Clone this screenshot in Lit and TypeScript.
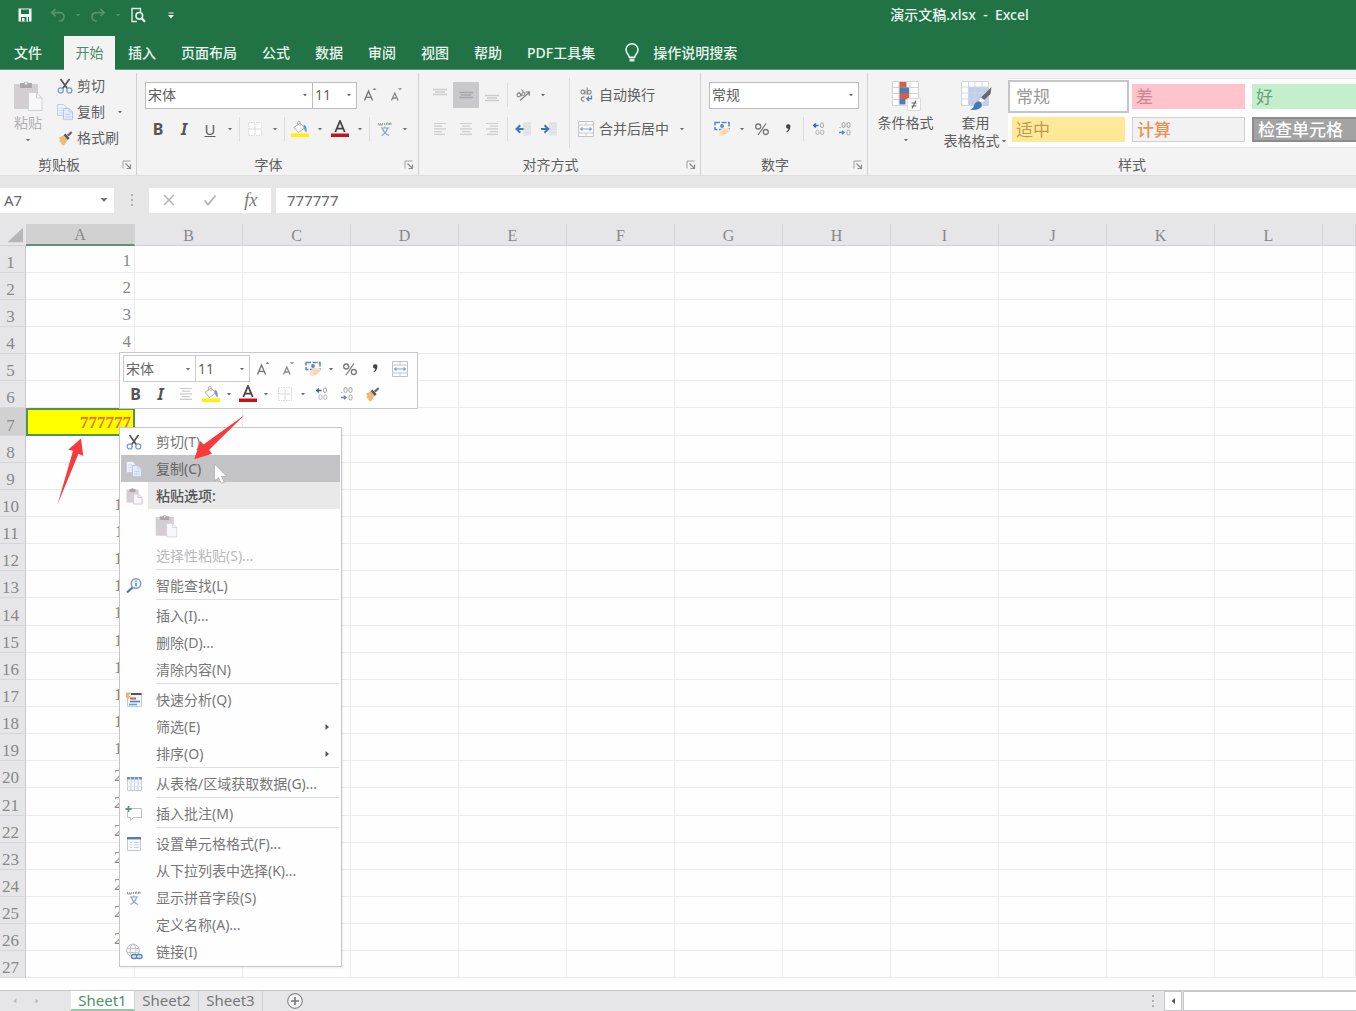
import { LitElement, html, svg, css, nothing, TemplateResult } from "lit";
import { customElement, state } from "lit/decorators.js";
import { classMap } from "lit/directives/class-map.js";

type Shape = [number, number, unknown];

const ICONS: Record<string, Shape> = {
  save: [16, 16, svg`<path d="M1.500 1.500h13v13h-13z" fill="#f4fbf6"/><path d="M4 2.500h8v4.500H4z" fill="#217346"/><path d="M4 10h8v4.500H4z" fill="#217346"/><path d="M5 11h2.500v3.500H5zM9.500 10h1.500v4.500h-1.500z" fill="#f4fbf6"/>`],
  undo: [16, 16, svg`<path d="M5.500 2 1.800 5.600l3.700 3.600M2.200 5.600h7.300c3 0 4.500 1.900 4.500 4.100 0 2.600-1.800 4.300-4.800 4.500" fill="none" stroke="#56936f" stroke-width="1.700"/>`],
  redo: [16, 16, svg`<path d="m10.500 2 3.700 3.600-3.700 3.600M13.800 5.600H6.500C3.500 5.600 2 7.500 2 9.700c0 2.600 1.800 4.300 4.800 4.500" fill="none" stroke="#56936f" stroke-width="1.700"/>`],
  preview: [16, 16, svg`<path d="M7 14.500H2V1.500h8.500V5" fill="none" stroke="#dcefe3" stroke-width="1.400"/><circle cx="9.300" cy="8.800" r="3.300" fill="none" stroke="#eef8f1" stroke-width="1.600"/><path d="m11.600 11.200 3.400 3.500" stroke="#eef8f1" stroke-width="2.200"/>`],
  customize: [10, 10, svg`<path d="M2.500 3h5" stroke="#e8f4ec" stroke-width="1"/><path d="M2 5h6L5 8.500z" fill="#e8f4ec"/>`],
  bulb: [16, 20, svg`<path d="M5.300 14.300c0-2.600-3.300-3.800-3.300-7.500a6 6 0 0 1 12 0c0 3.700-3.300 4.900-3.300 7.500z" fill="none" stroke="#f1faf4" stroke-width="1.500"/><path d="M5.500 15.500h5v3h-5z" fill="#d5ecdd"/>`],
  paste: [30, 32, svg`<path d="M1 4h24v25H1z" fill="#d3ced2"/><path d="M7 3h3.500a3 3 0 0 1 5 0H19v5H7z" fill="#aaa6a9"/><circle cx="13" cy="3.500" r="1.200" fill="#f3f3f3"/><path d="M15.500 12.500h8l5.500 5.500v12.500H15.500z" fill="#f8f7f9" stroke="#d5d0d6"/><path d="M23.500 12.500V18H29" fill="none" stroke="#cfcad0"/>`],
  pasteSm: [18, 18, svg`<path d="M1.500 2.500h12v13h-12z" fill="#d5ced3"/><path d="M4.500 2H6a1.800 1.800 0 0 1 3 0h1.500v3h-6z" fill="#a9a4a7"/><path d="M8.500 7h4.800L17 10.500V17H8.500z" fill="#f8f6f9" stroke="#d0cad0"/><path d="M13 7v3.500h4" fill="none" stroke="#d0cad0"/>`],
  cut: [16, 16, svg`<path d="m3.500 1 6.800 9.600M12.500 1 5.700 10.600" stroke="#555" stroke-width="1.700"/><circle cx="3.700" cy="12.400" r="2.500" fill="none" stroke="#7c9cd0" stroke-width="1.300"/><circle cx="12.300" cy="12.400" r="2.500" fill="none" stroke="#7c9cd0" stroke-width="1.300"/>`],
  copy: [18, 18, svg`<path d="M1.500 1.500h6L10.500 4v8.500h-9z" fill="#eef3fb" stroke="#c3cddf"/><path d="M3 5h4M3 7.500h4M3 10h4" stroke="#cddaf0"/><path d="M7.500 5.500h5.500l3.500 3.200v8h-9z" fill="#e2ebfa" stroke="#b7c6e0"/><path d="M13 5.500v3.500h3.500M9.500 11.500h5M9.500 14h5" stroke="#bccfee" fill="none"/>`],
  brush: [16, 16, svg`<path d="m1.500 8 5-2.500 4 4.500-3.500 5.500c-1.200-.2-2.300-1-3-2l1-1.500-2 .5-.8-1.500 1.500-1.200z" fill="#eebb71"/><path d="m6.500 5.300 2-1.800 4.200 4.800-2 1.800z" fill="#5d5a5a"/><path d="m10 4.800 4-3.600 1.400 1.600-3.800 3.700z" fill="#686464"/>`],
  growA: [18, 18, svg`<path d="m3.500 14.500 4-9.500 4 9.500M5 11.400h5" fill="none" stroke="#777" stroke-width="1.400"/><path d="M11.500 4h4l-2-2.200z" fill="#888"/>`],
  shrinkA: [18, 18, svg`<path d="m4.500 14.500 3.300-7.500 3.300 7.500M5.800 12h4" fill="none" stroke="#888" stroke-width="1.300"/><path d="M11 2.200h4L13 4.300z" fill="#888"/>`],
  borders: [16, 16, svg`<path d="M1.500 1.500h13v13h-13z" fill="#fff" stroke="#dcdadc" stroke-dasharray="1.500 1"/><path d="M8 2v12M2 8h12" stroke="#dcdadc"/>`],
  fill: [18, 18, svg`<path d="m3 7.500 6-4.500 4.500 5-6 4.500z" fill="#f8f8f8" stroke="#b0b0b2"/><path d="M6.500 5.500V2.300c0-1.500 2.700-1.500 2.700 0V6" fill="none" stroke="#b0b0b2"/><path d="M12.500 4.500c3 1 3.500 4 3 8-1.800-1-3-4.500-3-8z" fill="#6d97cc"/><path d="M0 13.500h18V17H0z" fill="#fff100"/>`],
  fontColor: [18, 18, svg`<path d="m4.300 12 4.700-11 4.700 11M6 8.600h6" fill="none" stroke="#444" stroke-width="1.800"/><path d="M0 13.500h18V17H0z" fill="#c8101e"/>`],
  phonetic: [16, 16, svg`<path d="M1.500 2v2h2V2M3.500 4h2V2M7.500 2v2M9.500 4V2h1.500v2M12.500 4V2H14v2" fill="none" stroke="#9a9a9a"/><path d="M4 7h8.500M8 5.500V7M10.500 7.500c-1 3.500-3 5.500-6 7M5.500 7.500c1 3.500 3 5.500 6.500 7" fill="none" stroke="#87a6d6" stroke-width="1.200"/>`],
  alignTop: [14, 14, svg`<path d="M0 1.500h14M2 4h10M0 6.500h14" stroke="#cdcbcd" stroke-width="1.400"/>`],
  alignMid: [14, 14, svg`<path d="M0 4.500h14M2 7h10M0 9.500h14" stroke="#a9a7aa" stroke-width="1.400"/>`],
  alignBot: [14, 14, svg`<path d="M0 7.500h14M2 10h10M0 12.500h14" stroke="#cdcbcd" stroke-width="1.400"/>`],
  alignLeft: [14, 14, svg`<path d="M1 1.500h12M1 4.200h8M1 6.900h12M1 9.600h8M1 12.300h11" stroke="#cdcbcd" stroke-width="1.200"/>`],
  alignCenter: [14, 14, svg`<path d="M1 1.500h12M3 4.200h8M1 6.900h12M3 9.600h8M1 12.300h12" stroke="#cdcbcd" stroke-width="1.200"/>`],
  alignRight: [14, 14, svg`<path d="M1 1.500h12M5 4.200h8M1 6.900h12M5 9.600h8M2 12.300h11" stroke="#cdcbcd" stroke-width="1.200"/>`],
  orient: [16, 16, svg`<path d="M5 13.500 14 5.500M10.500 5l4-.200-.300 4" fill="none" stroke="#808080" stroke-width="1.200"/><circle cx="3.800" cy="8" r="1.800" fill="none" stroke="#8a8a8a" stroke-width="1.200"/><path d="m3.800 5 3.200 4.200M6.500 2.500l3.500 4.500" stroke="#8a8a8a" stroke-width="1.200"/><circle cx="8.300" cy="7" r="1.500" fill="none" stroke="#8a8a8a"/>`],
  outdent: [16, 16, svg`<path d="M8 1.500h8v13H8z" fill="#dcdfe5"/><path d="M8 4h8M8 7h8M8 10h8M8 13h8" stroke="#e9eaee"/><path d="M8.500 8H2M5.300 4.300 1.500 8l3.800 3.700" fill="none" stroke="#3f78b8" stroke-width="2"/>`],
  indent: [16, 16, svg`<path d="M8 1.500h8v13H8z" fill="#dcdfe5"/><path d="M8 4h8M8 7h8M8 10h8M8 13h8" stroke="#e9eaee"/><path d="M0 8h6.500M3.500 4.300 7.300 8l-3.800 3.700" fill="none" stroke="#3f78b8" stroke-width="2"/>`],
  wrap: [16, 16, svg`<circle cx="4.700" cy="5" r="1.800" fill="none" stroke="#8c8c8c" stroke-width="1.200"/><path d="M7 3v4.500M9.200.500v7" stroke="#8c8c8c" stroke-width="1.200"/><circle cx="11.200" cy="5.300" r="1.900" fill="none" stroke="#8c8c8c" stroke-width="1.200"/><path d="M6.500 10.200c-3.200-1.400-4.800 4-.2 4" fill="none" stroke="#8c8c8c" stroke-width="1.400"/><path d="M13.500 8.500v3.300H9M11 9.700l-2.200 2.100L11 14" fill="none" stroke="#5a8ac6" stroke-width="1.400"/>`],
  merge: [18, 18, svg`<path d="M1.500 1.500h15v15h-15z" fill="#fbfbfc" stroke="#c3c3c7"/><path d="M1.500 5h15M1.500 13h15M9 1.500V5M9 13v3.500" stroke="#cacace"/><path d="M3.500 9h11M5.500 7.500 3.500 9l2 1.500M12.500 7.500l2 1.500-2 1.500" fill="none" stroke="#7fa6d6" stroke-width="1.100"/>`],
  currency: [18, 18, svg`<path d="M2 2.500h14v7H2z" fill="#f6faff" stroke="#5f87bb" stroke-width="1.500" stroke-dasharray="5 1.500"/><circle cx="9" cy="6" r="1.900" fill="#5a87c0"/><path d="M6.500 10.500c2-2 6.500-3.500 10-2 1 2-1 4-2.500 4.500-2 2.500-5 3.500-8 2.500z" fill="#f7dfc2"/><path d="M10 11h5M9 13.300h4" stroke="#ecc9a2"/>`],
  percent: [16, 16, svg`<circle cx="4.200" cy="5.500" r="2.500" fill="none" stroke="#777" stroke-width="1.300"/><circle cx="11.800" cy="11" r="2.500" fill="none" stroke="#777" stroke-width="1.300"/><path d="m12 2.500-8 11.500" stroke="#777" stroke-width="1.200"/>`],
  comma: [16, 16, svg`<path d="M6 5.500a2.200 2.200 0 1 1 4.300.600c-.200 2.500-1.300 4.300-3.500 5.400l-.500-.900c1.200-.900 1.900-1.900 2-2.900C7 7.700 6 6.900 6 5.500z" fill="#444"/>`],
  decInc: [16, 16, svg`<path d="M7.500 4.500H3M4.800 2.500l-2 2 2 2" fill="none" stroke="#3f66a8" stroke-width="1.600"/><rect x="9.500" y="2" width="3" height="4.500" rx="1.500" fill="none" stroke="#a4a4a4"/><rect x="5" y="9" width="3" height="4.500" rx="1.500" fill="none" stroke="#b4b4b4"/><rect x="9.800" y="9" width="3" height="4.500" rx="1.500" fill="none" stroke="#b4b4b4"/>`],
  decDec: [16, 16, svg`<path d="M2.500 6.500h1" stroke="#999"/><rect x="5" y="1.500" width="3" height="5" rx="1.500" fill="none" stroke="#a4a4a4"/><rect x="10" y="1.500" width="3" height="5" rx="1.500" fill="none" stroke="#a4a4a4"/><path d="M2 11.500h5M5 9.700l2 1.800-2 1.800" fill="none" stroke="#6286c4" stroke-width="1.400"/><rect x="10" y="9" width="3" height="5" rx="1.500" fill="none" stroke="#a4a4a4"/>`],
  condFormat: [32, 32, svg`<path d="M2.500 1.500h26v24h-26z" fill="#fff" stroke="#d3d3d6"/><path d="M9 1.500v24M20 1.500v24M2.500 7.500h26M2.500 13.500h26M2.500 19.500h26" stroke="#d3d3d6"/><path d="M9.500 2h7v5.500h-7z" fill="#da5c46"/><path d="M9.500 7.500H19V13H9.500z" fill="#467fb9"/><path d="M9.500 13H19v6H9.500z" fill="#da5c46"/><path d="M9.500 19h6v5.500h-6z" fill="#467fb9"/><path d="M17.500 18.500h13v12h-13z" fill="#fff" stroke="#dcdce0"/><path d="M21.500 23h5M21.500 26h5M26 20.500l-4 8" stroke="#666" stroke-width="1.200"/>`],
  tableFormat: [34, 32, svg`<path d="M2.500 1.500h27v24h-27z" fill="#fff" stroke="#d3d3d6"/><path d="M9.500 7h20v18.500h-20z" fill="#bcd0ec"/><path d="M9.500 1.500v24M16 1.500v24M23 1.500v24M2.500 7h27M2.500 13h27M2.500 19h27" stroke="#cfd6e2"/><path d="m32.500 7-1 7-9 8.500-3-2.500z" fill="#69696b"/><path d="m22 17.500 4 3-3 2.500-3.500-2.500z" fill="#fff"/><path d="M19 21.500c3 0 4.500 2 3.500 5.500-3 3-7 3.500-12 2.500 3-.5 4-2 4.500-4 .5-2 2-3.500 4-4z" fill="#4479b8"/>`],
  launcher: [10, 10, svg`<path d="M1 8.500V1h7.500" fill="none" stroke="#a0a0a0"/><path d="m3.500 3.500 4.500 4.500M8.500 4.500v4h-4" fill="none" stroke="#8c8c8c" stroke-width="1.200"/>`],
  search: [18, 18, svg`<circle cx="11" cy="6.500" r="4.800" fill="#f5f9ff" stroke="#7f9cc8" stroke-width="1.400"/><path d="M11 5.800v3.400M11 3.400v1.300" stroke="#4f7fc0" stroke-width="1.500"/><path d="M7.500 10.500 2 15.500" stroke="#4a75b3" stroke-width="2.200"/>`],
  quick: [18, 18, svg`<path d="M2.500 2.500h14v13h-14z" fill="#f3f5f8" stroke="#c5c9d2"/><path d="M6 3h10.500" stroke="#555" stroke-width="2"/><path d="M1 1.500h4.500l-2 3.500H6l-4.500 5 1-3.500H1z" fill="#f2b26b"/><path d="M5 7.500h6" stroke="#d9604f" stroke-width="2"/><path d="M5 10.500h10" stroke="#4c86c0" stroke-width="1.600"/><path d="M4 13.500h8" stroke="#61a3c4" stroke-width="1.600"/>`],
  table: [18, 18, svg`<path d="M2.500 2.500h14v13h-14z" fill="#f6f8fb" stroke="#c8cdd6"/><path d="M2 3.200h15" stroke="#6d8fc4" stroke-width="2.400" stroke-dasharray="3.200 .7"/><path d="M6 4v11.500M9.500 4v11.500M13 4v11.500" stroke="#c3d0e6"/><path d="M2.500 7.500h14M2.500 11.500h14" stroke="#e0e5ee"/>`],
  comment: [18, 18, svg`<path d="M6 3.500h10.500v9h-8l-3 3v-3h-3V7" fill="#fff" stroke="#bfc1c6"/><path d="M3.500 1v6M.5 4h6" stroke="#4f9e78" stroke-width="1.800"/>`],
  cells: [18, 18, svg`<path d="M2.500 2.500h13v13h-13z" fill="#f8f9fb" stroke="#c3c9d4"/><path d="M2 3.200h14" stroke="#4c7ebd" stroke-width="2.400"/><path d="M5 7.500h2M9 7.500h5M5 10h2M9 10h5M5 12.500h2M9 12.500h5" stroke="#ccd3df"/>`],
  link: [18, 18, svg`<circle cx="8" cy="7.500" r="6.300" fill="#fafafb" stroke="#b9bbc0"/><ellipse cx="8" cy="7.500" rx="2.800" ry="6.300" fill="none" stroke="#c2c4c9"/><path d="M2 5.500h12M2 9.500h12" stroke="#c2c4c9"/><rect x="6.500" y="11.500" width="5.500" height="4" rx="2" fill="#dce8f8" stroke="#5b82c2" stroke-width="1.300"/><rect x="11.500" y="11.500" width="5.500" height="4" rx="2" fill="#dce8f8" stroke="#5b82c2" stroke-width="1.300"/>`],
  caret: [8, 6, svg`<path d="M2 2h4L4 4.200z" fill="#666"/>`],
  caretLight: [8, 6, svg`<path d="M2 2h4L4 4.200z" fill="#5d9a77"/>`],
  caretBig: [10, 8, svg`<path d="M1.500 2h7L5 6z" fill="#777"/>`],
  right: [6, 8, svg`<path d="M1.500 1 5 4 1.500 7z" fill="#555"/>`],
  navLeft: [6, 8, svg`<path d="M4.500 1.500 1.500 4l3 2.500z" fill="#b9b9bb"/>`],
  navRight: [6, 8, svg`<path d="m1.500 1.500 3 2.500-3 2.500z" fill="#b9b9bb"/>`],
  scrollLeft: [8, 10, svg`<path d="M6 2 2.500 5 6 8z" fill="#555"/>`],
  cross: [14, 14, svg`<path d="m2 2 10 10M12 2 2 12" stroke="#b0b0b2" stroke-width="1.300"/>`],
  check: [14, 14, svg`<path d="m1.500 7.500 3.500 4 7.500-9" fill="none" stroke="#b4b4b6" stroke-width="1.800"/>`],
  dots: [4, 14, svg`<path d="M1 1h2v2H1zM1 6h2v2H1zM1 11h2v2H1z" fill="#b0b0b2"/>`],
  plus: [18, 18, svg`<circle cx="9" cy="9" r="7.300" fill="#f4f4f5" stroke="#8c8c8e" stroke-width="1.200"/><path d="M9 5v8M5 9h8" stroke="#777" stroke-width="1.600"/>`],
  corner: [26, 22, svg`<path d="M24 3v16H7z" fill="#b6b6b8"/>`],
};

const icon = (name: string, scale = 1) => {
  const [w, h, shape] = ICONS[name];
  return html`<svg width=${w * scale} height=${h * scale} viewBox="0 0 ${w} ${h}" aria-hidden="true">${shape}</svg>`;
};

const TABS = ["插入", "页面布局", "公式", "数据", "审阅", "视图", "帮助", "PDF工具集"];
const COLUMNS = "ABCDEFGHIJKL".split("");
const ROWS = Array.from({ length: 27 }, (_, i) => i + 1);

interface MenuEntry {
  text: string;
  icon?: string;
  kind?: "hover" | "head" | "off";
  sub?: boolean;
  rule?: boolean;
}

const MENU_TOP: MenuEntry[] = [
  { text: "剪切(T)", icon: "cut" },
  { text: "复制(C)", icon: "copy", kind: "hover" },
  { text: "粘贴选项:", icon: "pasteSm", kind: "head" },
];

const MENU_REST: MenuEntry[] = [
  { text: "选择性粘贴(S)...", kind: "off" },
  { text: "智能查找(L)", icon: "search", rule: true },
  { text: "插入(I)...", rule: true },
  { text: "删除(D)..." },
  { text: "清除内容(N)" },
  { text: "快速分析(Q)", icon: "quick", rule: true },
  { text: "筛选(E)", sub: true },
  { text: "排序(O)", sub: true },
  { text: "从表格/区域获取数据(G)...", icon: "table", rule: true },
  { text: "插入批注(M)", icon: "comment", rule: true },
  { text: "设置单元格格式(F)...", icon: "cells", rule: true },
  { text: "从下拉列表中选择(K)..." },
  { text: "显示拼音字段(S)", icon: "phonetic" },
  { text: "定义名称(A)..." },
  { text: "链接(I)", icon: "link" },
];

const STYLES = [
  ["常规", "plain"],
  ["差", "bad"],
  ["好", "good"],
  ["适中", "neutral"],
  ["计算", "calc"],
  ["检查单元格", "verify"],
];

@customElement("app-root")
export class AppRoot extends LitElement {
  @state() private sheet = "Sheet1";

  static styles = css`
    :host {
      display: block;
      font: 14px/20px "Noto Sans", "Noto Sans CJK SC", sans-serif;
      color: #666;
    }
    * { box-sizing: border-box; }
    button, select, input {
      font: inherit;
      color: inherit;
      background: none;
      border: 0;
      padding: 0;
      margin: 0;
      border-radius: 0;
      outline: 0;
    }
    button { display: flex; align-items: center; justify-content: center; white-space: nowrap; }
    svg { display: block; flex: none; }
    .app { display: flex; flex-direction: column; height: 100vh; overflow: hidden; background: #fefefe; }

    .title-bar {
      display: grid;
      grid-template-columns: 65fr 34fr;
      align-items: center;
      height: 36px;
      padding-bottom: 6px;
      background: #217346;
      color: #e9f5ed;
    }
    .title { font-size: 14px; font-weight: 500; white-space: pre; }
    .quick { display: flex; align-items: center; padding-left: 12px; }
    .quick button { width: 26px; height: 26px; }
    .quick .drop { width: 14px; }
    .quick .gap { margin-left: 7px; }

    .tabs { display: flex; height: 34px; background: #217346; color: #e9f5ed; border-bottom: 1px solid #5d9a77; }
    .tabs button { padding: 0 12px 0 13px; font-weight: 500; }
    .tabs .file { width: 64px; padding: 0 8px 0 0; }
    .tabs .active { width: 51px; padding: 0; margin-bottom: -1px; background: #f3f3f3; color: #4f8a6a; font-weight: 400; }
    .tabs .tell { gap: 13px; margin-left: 4px; }

    .ribbon { display: flex; height: 106px; background: #f3f3f3; border-bottom: 1px solid #dedee0; overflow: hidden; flex: none; color: #5f5f5f; }
    .group { display: flex; flex-direction: column; flex: none; padding-left: 8px; }
    .group + .group { border-left: 1px solid #d2d2d4; margin-left: -1px; }
    .group { margin-top: 3px; }
    .clip { width: 137px; }
    .font, .align { width: 283px; }
    .number { width: 168px; }
    .styles { width: 529px; }
    .group.styles { padding-left: 0; }
    .body { height: 83px; padding-top: 5px; flex: none; }
    .line { display: flex; align-items: center; height: 34px; }
    .caption { display: flex; align-items: center; height: 18px; margin-left: -8px; }
    .styles .caption { margin-left: 0; }
    .caption span { flex: 1; text-align: center; }
    .caption button { width: 18px; height: 18px; margin-right: 1px; }
    .tool { width: 26px; height: 26px; flex: none; }
    .drop { width: 14px; height: 26px; flex: none; }
    .tool.on { background: #c9c8ca; }
    .bar { width: 1px; height: 24px; margin: 0 2px; background: #dcdcde; flex: none; }
    .b { font-weight: 700; font-size: 16px; color: #555; }
    .i { font-style: italic; font-weight: 700; font-size: 16px; color: #555; }
    .u { text-decoration: underline; font-size: 15px; }

    .clip .body { display: flex; padding: 0; margin-left: -8px; }
    .paste { flex-direction: column; width: 56px; justify-content: flex-start; padding-top: 7px; color: #b3b1b3; }
    .paste span { line-height: 22px; margin-bottom: 3px; }
    .clip-list { display: flex; flex-direction: column; }
    .clip-list .row { display: flex; height: 26px; gap: 8px; }
    .clip-list button:first-child { gap: 3px; }
    .clip-list .icon, .label-tool .icon { display: flex; width: 18px; justify-content: center; }

    .combo { display: grid; align-items: center; height: 27px; border: 1px solid #bcbcbe; background: #fff; flex: none; }
    .combo select { appearance: none; width: 100%; height: 25px; padding-left: 2px; grid-area: 1 / 1; }
    .combo svg { grid-area: 1 / 1; justify-self: end; margin-right: 3px; pointer-events: none; }
    .w-font { width: 168px; }
    .w-size { width: 45px; margin-left: -1px; }
    .w-num { width: 150px; }

    .align .body { display: flex; }
    .align-left { width: 143px; height: 70px; border-right: 1px solid #dcdcde; margin-right: 7px; }
    .label-tool { gap: 4px; height: 26px; }
    .label-tool + .drop { margin-left: 6px; }

    .styles .body { display: flex; }
    .big { flex-direction: column; justify-content: flex-start; padding-top: 2px; line-height: 18px; }
    .big > svg { margin-bottom: 2px; }
    .cond { width: 75px; }
    .tablef { width: 65px; }
    .big .with-caret { display: flex; align-items: center; }
    .big .alone { display: flex; height: 16px; align-items: center; }
    .gallery {
      display: grid;
      grid-template-columns: 120px 120px 120px;
      grid-auto-rows: 33px;
      flex: none;
      width: 388px;
      height: 70px;
      padding-top: 1px;
      background: #fdfdfd;
      border: 1px solid #e2e2e4;
      border-width: 1px 0;
    }
    .gallery button { justify-content: flex-start; margin: 4px 3px 4px 4px; padding-left: 4px; font-size: 17px; color: #999; }
    .gallery .plain { background: #fff; outline: 2px solid #c5c5c8; outline-offset: 2px; }
    .gallery .bad { background: #ffc3cd; color: #c98791; }
    .gallery .good { background: #c3efcc; color: #6f9f7a; }
    .gallery .neutral { background: #ffe999; color: #c19a50; }
    .gallery .calc { background: #f2f2f3; border: 1px solid #d0d0d3; color: #f09050; font-weight: 500; }
    .gallery .verify { background: #a3a3a4; border: 2px solid #8c8c8d; color: #fff; font-weight: 500; }

    .formula-bar { display: flex; align-items: center; height: 48px; flex: none; background: #e6e6e7; }
    .formula-bar > * { height: 25px; }
    .name-box { display: flex; width: 114px; background: #fff; }
    .name-box input { flex: 1; min-width: 0; padding-left: 4px; font-size: 15px; }
    .name-box button { width: 20px; }
    .grip { display: flex; align-items: center; justify-content: center; width: 35px; }
    .fx-tools { display: flex; width: 122px; background: #fff; }
    .fx-tools button { width: 41px; }
    .fx { font: italic 18px/20px "Liberation Serif", serif; color: #777; }
    .formula { flex: 1; min-width: 0; margin-left: 5px; background: #fff; }
    .formula input { width: 100%; height: 25px; padding-left: 11px; font-size: 15px; }

    .sheet { position: relative; flex: 1; min-height: 0; overflow: hidden; }
    .cells { width: 100%; table-layout: fixed; border-collapse: separate; border-spacing: 0; font: 17px/20px "Liberation Serif", serif; color: #888; }
    .cells th { font-weight: 400; padding: 0; background: #e6e6e8; }
    .cells thead th { height: 22px; border-right: 1px solid #d4d4d6; border-bottom: 1px solid #d0d0d2; font-size: 16px; line-height: 19px; padding-top: 2px; }
    .cells thead .corner { padding: 0; border-right: 0; line-height: 0; }
    .cells thead .corner svg { height: 20px; }
    .cells thead .picked { background: #d1d1d2; border-bottom: 2px solid #5c9277; padding-top: 1px; }
    .c-head { width: 26px; }
    .c-first { width: 109px; }
    .c-col { width: 108px; }
    .cells tbody th { height: 27px; border-right: 1px solid #cacacc; border-bottom: 1px solid #d6d6d8; line-height: 18px; vertical-align: bottom; text-align: center; padding-right: 4px; }
    .cells tbody tr:nth-child(7n) th { height: 28px; }
    .cells tbody td { padding: 3px 3px 0 0; line-height: 20px; text-align: right; border-right: 1px solid #ececed; border-bottom: 1px solid #ececed; background: #fefefe; }
    .cells tbody .picked th { background: #d1d1d2; }
    .cells tbody .picked .active { background: #ff0; border: 2px solid #55924f; padding: 1px 2px 0 0; color: #ee7020; font-weight: 700; }

    .mini { position: absolute; left: 119px; top: 128px; width: 299px; padding: 3px 3px 2px; background: #fefefe; border: 1px solid #c9c9cb; }
    .mini .line { height: 25px; }
    .mini .combo { height: 27px; border-color: #cacacc; }
    .mini .w-font { width: 73px; }
    .mini .w-size { width: 55px; }
    .mini .drop { width: 12px; }
    .mini .tool { width: 25px; height: 24px; }

    .menu { position: absolute; left: 119px; top: 203px; width: 223px; padding-bottom: 1px; background: #fefefe; border: 1px solid #c6c6c8; box-shadow: 1px 1px 2px #0001; color: #777; }
    .menu button { width: 100%; height: 27px; justify-content: flex-start; }
    .menu .ico { display: flex; justify-content: center; width: 28px; flex: none; }
    .menu .txt { flex: 1; display: flex; align-items: center; height: 100%; padding-left: 8px; text-align: left; }
    .menu .hover { background: #c3c2c4; color: #666; box-shadow: inset -1px 0 #fefefe, inset 1px 0 #fefefe; }
    .menu .head .txt { background: #e9e9ea; color: #555; font-weight: 500; margin-right: 1px; }
    .menu .off { color: #b9b9bb; }
    .menu .row-icons { height: 33px; padding-left: 35px; }
    .menu .arrow { margin-right: 11px; }
    .menu hr { border: 0; height: 1px; margin: 0 2px 2px 36px; background: #dfdfe1; }

    .marks { position: absolute; left: 0; top: 176px; pointer-events: none; }

    .sheet-bar { display: flex; height: 21px; flex: none; background: #e6e6e8; border-top: 1px solid #c8c8ca; font-size: 15px; line-height: 18px; color: #777; }
    .nav { width: 22px; }
    .nav-group { display: flex; width: 71px; padding-left: 4px; }
    .sheet-bar .tab { width: 64px; border-right: 1px solid #d2d2d4; padding-bottom: 2px; }
    .sheet-bar .tab.current { background: #fff; color: #4d9066; border-bottom: 2px solid #9cc3ab; padding-bottom: 0; }
    .sheet-bar .add { width: 64px; }
    .scroll { display: flex; width: 205px; margin-left: auto; }
    .scroll .grip { width: 13px; padding-right: 8px; justify-content: flex-start; }
    .scroll .back { width: 18px; background: #fff; border: 1px solid #c6c6c8; }
    .scroll .track { flex: 1; background: #fff; border: 1px solid #c6c6c8; border-right: 0; margin-left: 1px; }
  `;

  private tool(name: string, label: string, cls = "") {
    return html`<button class="tool ${cls}" aria-label=${label}>${icon(name)}</button>`;
  }

  private drop(label: string) {
    return html`<button class="drop" aria-label=${label}>${icon("caret")}</button>`;
  }

  private combo(cls: string, label: string, value: string) {
    return html`<div class="combo ${cls}">
      <select aria-label=${label}><option>${value}</option></select>${icon("caret")}
    </div>`;
  }

  private group(cls: string, caption: string, body: TemplateResult, launcher = true) {
    return html`<section class="group ${cls}" aria-label=${caption}>
      <div class="body">${body}</div>
      <div class="caption">
        <span>${caption}</span>
        ${launcher ? html`<button aria-label="${caption}设置">${icon("launcher")}</button>` : nothing}
      </div>
    </section>`;
  }

  private entry(e: MenuEntry) {
    return html`${e.rule ? html`<hr />` : nothing}
      <button class=${e.kind ?? "normal"} role="menuitem" ?disabled=${e.kind === "off"}>
        <span class="ico">${e.icon ? icon(e.icon) : nothing}</span>
        <span class="txt">${e.text}</span>
        ${e.sub ? html`<span class="arrow">${icon("right")}</span>` : nothing}
      </button>`;
  }

  private renderRibbon() {
    const bar = html`<span class="bar"></span>`;
    return html`<div class="ribbon">
      ${this.group("clip", "剪贴板", html`
        <button class="paste">${icon("paste")}<span>粘贴</span>${icon("caret")}</button>
        <div class="clip-list">
          <div class="row"><button><span class="icon">${icon("cut")}</span>剪切</button></div>
          <div class="row"><button><span class="icon">${icon("copy")}</span>复制</button>${this.drop("复制选项")}</div>
          <div class="row"><button><span class="icon">${icon("brush")}</span>格式刷</button></div>
        </div>`)}
      ${this.group("font", "字体", html`
        <div class="line">
          ${this.combo("w-font", "字体", "宋体")}${this.combo("w-size", "字号", "11")}
          ${this.tool("growA", "增大字号")}${this.tool("shrinkA", "减小字号")}
        </div>
        <div class="line">
          <button class="tool b">B</button><button class="tool i">I</button><button class="tool u">U</button>${this.drop("下划线选项")}${bar}
          ${this.tool("borders", "边框")}${this.drop("边框选项")}${bar}
          ${this.tool("fill", "填充颜色")}${this.drop("填充颜色选项")}
          ${this.tool("fontColor", "字体颜色")}${this.drop("字体颜色选项")}${bar}
          ${this.tool("phonetic", "拼音")}${this.drop("拼音选项")}
        </div>`)}
      ${this.group("align", "对齐方式", html`
        <div class="align-left">
          <div class="line">
            ${this.tool("alignTop", "顶端对齐")}${this.tool("alignMid", "垂直居中", "on")}${this.tool("alignBot", "底端对齐")}${bar}
            ${this.tool("orient", "方向")}${this.drop("方向选项")}
          </div>
          <div class="line">
            ${this.tool("alignLeft", "左对齐")}${this.tool("alignCenter", "居中")}${this.tool("alignRight", "右对齐")}${bar}
            ${this.tool("outdent", "减少缩进量")}${this.tool("indent", "增加缩进量")}
          </div>
        </div>
        <div class="align-right">
          <div class="line"><button class="label-tool"><span class="icon">${icon("wrap")}</span>自动换行</button></div>
          <div class="line"><button class="label-tool"><span class="icon">${icon("merge")}</span>合并后居中</button>${this.drop("合并选项")}</div>
        </div>`)}
      ${this.group("number", "数字", html`
        <div class="line">${this.combo("w-num", "数字格式", "常规")}</div>
        <div class="line">
          ${this.tool("currency", "会计数字格式")}${this.drop("会计格式选项")}
          ${this.tool("percent", "百分比")}${this.tool("comma", "千位分隔")}${bar}
          ${this.tool("decInc", "增加小数位数")}${this.tool("decDec", "减少小数位数")}
        </div>`)}
      ${this.group("styles", "样式", html`
        <button class="big cond">${icon("condFormat")}<span>条件格式</span><span class="alone">${icon("caret")}</span></button>
        <button class="big tablef">${icon("tableFormat")}<span>套用</span><span class="with-caret">表格格式${icon("caret")}</span></button>
        <div class="gallery">
          ${STYLES.map(([text, cls]) => html`<button class=${cls}>${text}</button>`)}
        </div>`, false)}
    </div>`;
  }

  private renderCells() {
    return html`<table class="cells">
      <colgroup>
        <col class="c-head" />
        ${COLUMNS.map((c) => html`<col class=${c === "A" ? "c-first" : "c-col"} />`)}
        <col />
      </colgroup>
      <thead>
        <tr>
          <th class="corner">${icon("corner")}</th>
          ${COLUMNS.map((c) => html`<th scope="col" class=${classMap({ picked: c === "A" })}>${c}</th>`)}
          <th></th>
        </tr>
      </thead>
      <tbody>
        ${ROWS.map((r) => html`<tr class=${classMap({ picked: r === 7 })}>
          <th scope="row">${r}</th>
          <td class=${classMap({ active: r === 7 })}>${r === 7 ? "777777" : r < 27 ? r : nothing}</td>
          ${COLUMNS.map(() => html`<td></td>`)}
        </tr>`)}
      </tbody>
    </table>`;
  }

  private renderMini() {
    return html`<div class="mini" role="toolbar">
      <div class="line">
        ${this.combo("w-font", "字体", "宋体")}${this.combo("w-size", "字号", "11")}
        ${this.tool("growA", "增大字号")}${this.tool("shrinkA", "减小字号")}
        ${this.tool("currency", "会计数字格式")}${this.drop("会计格式选项")}
        ${this.tool("percent", "百分比")}${this.tool("comma", "千位分隔")}${this.tool("merge", "合并后居中")}
      </div>
      <div class="line">
        <button class="tool b">B</button><button class="tool i">I</button>${this.tool("alignCenter", "居中")}
        ${this.tool("fill", "填充颜色")}${this.drop("填充颜色选项")}
        ${this.tool("fontColor", "字体颜色")}${this.drop("字体颜色选项")}
        ${this.tool("borders", "边框")}${this.drop("边框选项")}
        ${this.tool("decInc", "增加小数位数")}${this.tool("decDec", "减少小数位数")}${this.tool("brush", "格式刷")}
      </div>
    </div>`;
  }

  render() {
    return html`<div class="app">
      <header class="title-bar">
        <div class="quick">
          <button aria-label="保存">${icon("save")}</button>
          <button class="gap" aria-label="撤消">${icon("undo")}</button>
          <button class="drop" aria-label="撤消列表">${icon("caretLight")}</button>
          <button aria-label="恢复">${icon("redo")}</button>
          <button class="drop" aria-label="恢复列表">${icon("caretLight")}</button>
          <button aria-label="打印预览">${icon("preview")}</button>
          <button class="gap" aria-label="自定义快速访问工具栏">${icon("customize")}</button>
        </div>
        <div class="title">演示文稿.xlsx  -  Excel</div>
      </header>
      <nav class="tabs">
        <button class="file">文件</button>
        <button class="active">开始</button>
        ${TABS.map((t) => html`<button>${t}</button>`)}
        <button class="tell">${icon("bulb")}操作说明搜索</button>
      </nav>
      ${this.renderRibbon()}
      <div class="formula-bar">
        <div class="name-box">
          <input aria-label="名称框" .value=${"A7"} />
          <button aria-label="名称列表">${icon("caretBig")}</button>
        </div>
        <span class="grip">${icon("dots")}</span>
        <div class="fx-tools">
          <button aria-label="取消">${icon("cross")}</button>
          <button aria-label="输入">${icon("check")}</button>
          <button class="fx">fx</button>
        </div>
        <div class="formula"><input aria-label="编辑栏" .value=${"777777"} /></div>
      </div>
      <main class="sheet">
        ${this.renderCells()}
        ${this.renderMini()}
        <div class="menu" role="menu">
          ${MENU_TOP.map((e) => this.entry(e))}
          <button class="row-icons" aria-label="粘贴">${icon("paste", 0.75)}</button>
          ${MENU_REST.map((e) => this.entry(e))}
        </div>
        <svg class="marks" width="260" height="120" viewBox="0 400 260 120" aria-hidden="true">
          <path d="M57.500 504.500 73 450.800l-4.800-1L81 438.500l2.300 17.500-4.800-2.300z" fill="#f83a3c" />
          <path d="M244.500 415 203.500 444.500l-3.200-3.500-6 18.300 17.700-5.500-3-3.800z" fill="#f83a3c" />
          <path d="M214.500 464v17l4-3.500 2.800 6 3-1.300-2.800-5.800h5.500z" fill="#fff" stroke="#aaa" stroke-width=".8" />
        </svg>
      </main>
      <footer class="sheet-bar">
        <div class="nav-group">
          <button class="nav" aria-label="上一个工作表">${icon("navLeft")}</button>
          <button class="nav" aria-label="下一个工作表">${icon("navRight")}</button>
        </div>
        ${["Sheet1", "Sheet2", "Sheet3"].map((s) => html`<button
          class=${classMap({ tab: true, current: s === this.sheet })}
          @click=${() => (this.sheet = s)}
        >${s}</button>`)}
        <button class="add" aria-label="新工作表">${icon("plus")}</button>
        <div class="scroll">
          <span class="grip">${icon("dots")}</span>
          <button class="back" aria-label="向左滚动">${icon("scrollLeft")}</button>
          <div class="track"></div>
        </div>
      </footer>
    </div>`;
  }
}
